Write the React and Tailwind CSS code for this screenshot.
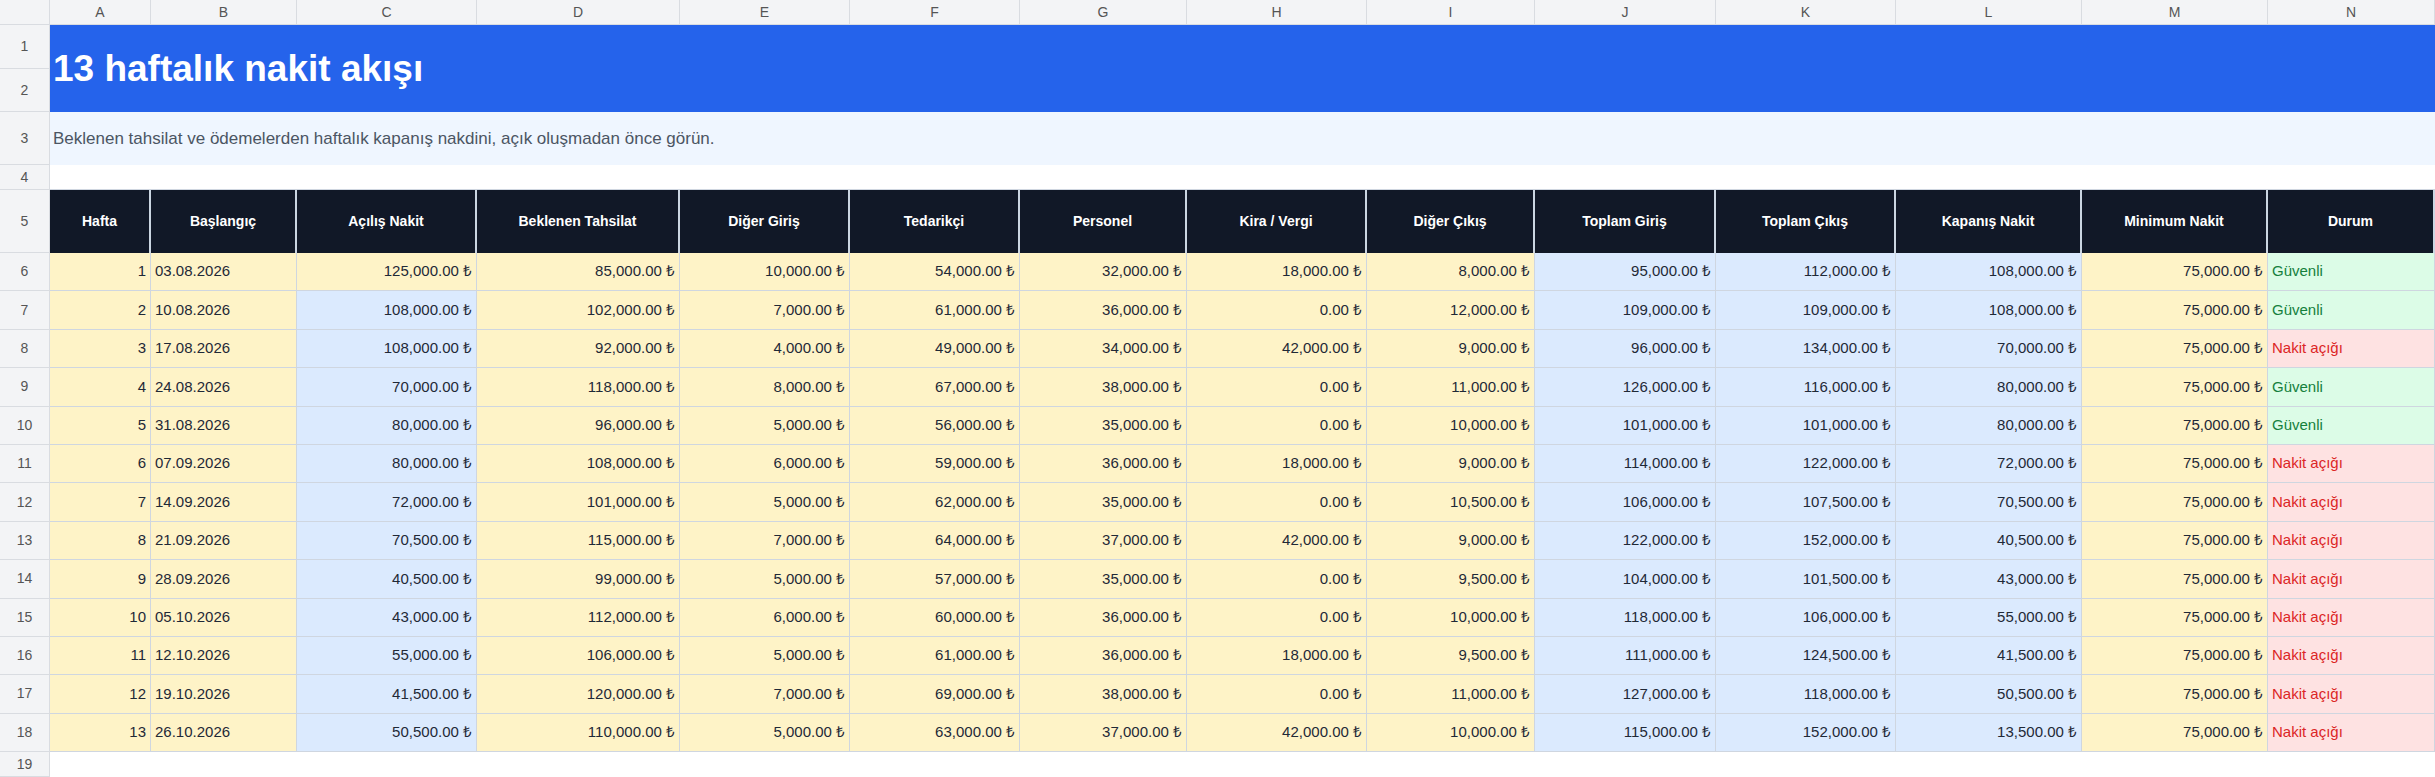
const cols = ["A","B","C","D","E","F","G","H","I","J","K","L","M","N"];
const heads = ["Hafta","Başlangıç","Açılış Nakit","Beklenen Tahsilat","Diğer Giriş","Tedarikçi","Personel","Kira / Vergi","Diğer Çıkış","Toplam Giriş","Toplam Çıkış","Kapanış Nakit","Minimum Nakit","Durum"];
const rows = [
  ["03.08.2026",125000,85000,10000,54000,32000,18000,8000,95000,112000,108000],
  ["10.08.2026",108000,102000,7000,61000,36000,0,12000,109000,109000,108000],
  ["17.08.2026",108000,92000,4000,49000,34000,42000,9000,96000,134000,70000],
  ["24.08.2026",70000,118000,8000,67000,38000,0,11000,126000,116000,80000],
  ["31.08.2026",80000,96000,5000,56000,35000,0,10000,101000,101000,80000],
  ["07.09.2026",80000,108000,6000,59000,36000,18000,9000,114000,122000,72000],
  ["14.09.2026",72000,101000,5000,62000,35000,0,10500,106000,107500,70500],
  ["21.09.2026",70500,115000,7000,64000,37000,42000,9000,122000,152000,40500],
  ["28.09.2026",40500,99000,5000,57000,35000,0,9500,104000,101500,43000],
  ["05.10.2026",43000,112000,6000,60000,36000,0,10000,118000,106000,55000],
  ["12.10.2026",55000,106000,5000,61000,36000,18000,9500,111000,124500,41500],
  ["19.10.2026",41500,120000,7000,69000,38000,0,11000,127000,118000,50500],
  ["26.10.2026",50500,110000,5000,63000,37000,42000,10000,115000,152000,13500],
];
const fmt = (n) => n.toLocaleString("en-US", { minimumFractionDigits: 2 }) + " ₺";
const rh = "bg-[#f3f4f6] border-r border-b border-[#d9dce1] text-[#555] text-[14px] flex items-center justify-center";
const cell = "border-r border-b border-[#cfd6e0] text-[15px] text-[#1f2937] flex items-center px-1";

export default function App() {
  return (
    <div className="w-[2435px] h-[777px] overflow-hidden bg-white" style={{ fontFamily: '"Liberation Sans", Arial, sans-serif' }}>
      <div className="grid grid-cols-[50px_101px_146px_180px_203px_170px_170px_167px_180px_168px_181px_180px_186px_186px_167px] grid-rows-[25px_44px_43px_53px_25px_63px_repeat(13,38.4px)_25px]">
        <div className={rh} />
        {cols.map((c) => <div key={c} className={rh}>{c}</div>)}

        <div className={rh}>1</div>
        <div className="col-span-14 row-span-2 bg-[#2563eb] flex items-center px-[3px] text-white font-bold text-[37px]">13 haftalık nakit akışı</div>
        <div className={rh}>2</div>

        <div className={rh}>3</div>
        <div className="col-span-14 bg-[#eff6ff] flex items-center px-[3px] text-[#4b5563] text-[17px]">Beklenen tahsilat ve ödemelerden haftalık kapanış nakdini, açık oluşmadan önce görün.</div>

        <div className={rh}>4</div>
        <div className="col-span-14 border-b border-[#cfd6e0]" />

        <div className={rh}>5</div>
        {heads.map((h) => (
          <div key={h} className="bg-[#111827] border-r-2 border-[#cbd5e1] text-white font-bold text-[14px] flex items-center justify-center">{h}</div>
        ))}

        {rows.map((r, i) => {
          const [date, ...nums] = r;
          const ok = nums[9] >= 75000;
          return [
            <div key={"h" + i} className={rh}>{i + 6}</div>,
            <div key={"a" + i} className={`${cell} bg-[#fef3c7] justify-end`}>{i + 1}</div>,
            <div key={"b" + i} className={`${cell} bg-[#fef3c7]`}>{date}</div>,
            ...nums.map((n, j) => {
              const blue = (j === 0 && i > 0) || j >= 7;
              return <div key={i + "-" + j} className={`${cell} justify-end ${blue ? "bg-[#dbeafe]" : "bg-[#fef3c7]"}`}>{fmt(n)}</div>;
            }),
            <div key={"m" + i} className={`${cell} bg-[#fef3c7] justify-end`}>{fmt(75000)}</div>,
            <div key={"n" + i} className={`${cell} ${ok ? "bg-[#dcfce7] text-[#15803d]" : "bg-[#fee2e2] text-[#dc2626]"}`}>{ok ? "Güvenli" : "Nakit açığı"}</div>,
          ];
        })}

        <div className={rh}>19</div>
        <div className="col-span-14" />
      </div>
    </div>
  );
}
